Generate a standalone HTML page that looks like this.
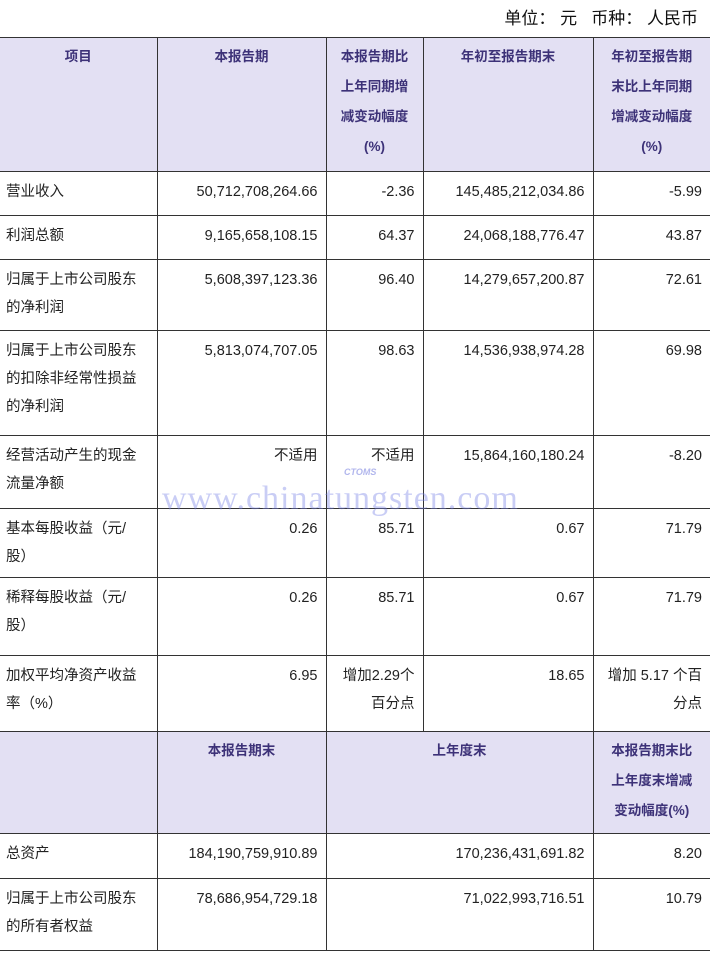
<!DOCTYPE html>
<html><head><meta charset="utf-8"><style>
body{margin:0;width:710px;height:953px;background:#fff;position:relative;overflow:hidden;font-family:"Liberation Sans","Noto Sans CJK SC",sans-serif;color:#222;}
.u{position:absolute;right:12px;top:4px;font-size:17px;color:#111;}
table{position:absolute;left:0;top:37px;border-collapse:collapse;table-layout:fixed;width:710px;}
td{border:1.5px solid #333;vertical-align:top;font-size:14.5px;line-height:28px;padding:6px 8px 0 6px;text-align:right;white-space:nowrap;}
td.l{text-align:left;}
tr.h td{background:#e3e0f3;color:#3d3278;font-weight:bold;text-align:center;font-size:13.5px;line-height:30px;padding:4px 4px 0;}
td:first-child{border-left:none}td:last-child{border-right:none}
.wm{position:absolute;left:162px;top:480px;font-family:"Liberation Serif",serif;font-size:34px;color:rgba(120,130,230,.4);letter-spacing:1px;}
.ct{position:absolute;left:344px;top:467px;font-size:9px;font-style:italic;font-weight:bold;color:rgba(100,110,220,.5);}
</style></head><body>
<div class="u">单位： 元 &nbsp; 币种： 人民币</div>
<table>
<colgroup><col style="width:157px"><col style="width:169px"><col style="width:97px"><col style="width:170px"><col style="width:117px"></colgroup>
<tr class="h" style="height:134px"><td>项目</td><td>本报告期</td><td>本报告期比<br>上年同期增<br>减变动幅度<br>(%)</td><td>年初至报告期末</td><td>年初至报告期<br>末比上年同期<br>增减变动幅度<br>(%)</td></tr>
<tr style="height:44px"><td class="l">营业收入</td><td>50,712,708,264.66</td><td>-2.36</td><td>145,485,212,034.86</td><td>-5.99</td></tr>
<tr style="height:44px"><td class="l">利润总额</td><td>9,165,658,108.15</td><td>64.37</td><td>24,068,188,776.47</td><td>43.87</td></tr>
<tr style="height:71px"><td class="l">归属于上市公司股东<br>的净利润</td><td>5,608,397,123.36</td><td>96.40</td><td>14,279,657,200.87</td><td>72.61</td></tr>
<tr style="height:105px"><td class="l">归属于上市公司股东<br>的扣除非经常性损益<br>的净利润</td><td>5,813,074,707.05</td><td>98.63</td><td>14,536,938,974.28</td><td>69.98</td></tr>
<tr style="height:73px"><td class="l">经营活动产生的现金<br>流量净额</td><td>不适用</td><td>不适用</td><td>15,864,160,180.24</td><td>-8.20</td></tr>
<tr style="height:69px"><td class="l">基本每股收益（元/<br>股）</td><td>0.26</td><td>85.71</td><td>0.67</td><td>71.79</td></tr>
<tr style="height:78px"><td class="l">稀释每股收益（元/<br>股）</td><td>0.26</td><td>85.71</td><td>0.67</td><td>71.79</td></tr>
<tr style="height:76px"><td class="l">加权平均净资产收益<br>率（%）</td><td>6.95</td><td>增加2.29个<br>百分点</td><td>18.65</td><td>增加 5.17 个百<br>分点</td></tr>
<tr class="h" style="height:102px"><td></td><td>本报告期末</td><td colspan="2">上年度末</td><td>本报告期末比<br>上年度末增减<br>变动幅度(%)</td></tr>
<tr style="height:45px"><td class="l">总资产</td><td>184,190,759,910.89</td><td colspan="2">170,236,431,691.82</td><td>8.20</td></tr>
<tr style="height:72px"><td class="l">归属于上市公司股东<br>的所有者权益</td><td>78,686,954,729.18</td><td colspan="2">71,022,993,716.51</td><td>10.79</td></tr>
</table>
<div class="wm">www.chinatungsten.com</div>
<div class="ct">CTOMS</div>
</body></html>
